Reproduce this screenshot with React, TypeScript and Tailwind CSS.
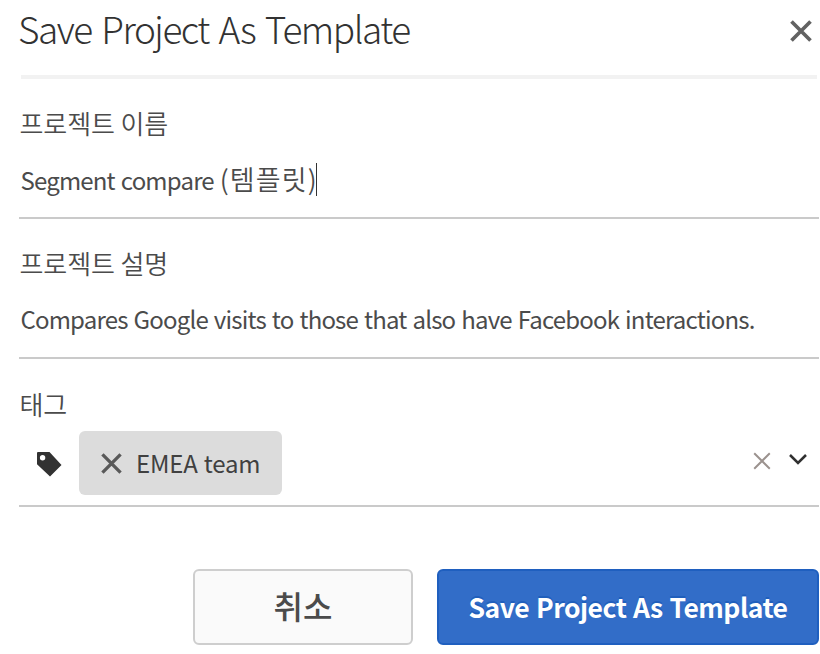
import type { ReactNode } from "react";

function Cross({ size, color, width }: { size: number; color: string; width: number }) {
  return (
    <svg width={size} height={size} viewBox="0 0 22 22" fill="none" stroke={color} strokeWidth={width} className="block shrink-0">
      <path d="M1.5 1.5 20.5 20.5M20.5 1.5 1.5 20.5" />
    </svg>
  );
}

function Field({ label, children }: { label: string; children: ReactNode }) {
  return (
    <div className="ml-[19px] mr-px h-[140px] border-b-2 border-[#cacaca]">
      <div className="h-[70px] pt-[27px] pl-[0.5px] text-[26px] leading-[34px] font-[350] tracking-[-0.1px]">{label}</div>
      <div className="flex h-[60px] items-center pl-[1.5px] text-[24px] leading-[34px] tracking-[-0.82px] [word-spacing:1.4px]">{children}</div>
    </div>
  );
}

export default function App() {
  return (
    <main className="h-[654px] w-[820px] overflow-hidden bg-white font-['Noto_Sans_CJK_KR','Noto_Sans',sans-serif] whitespace-nowrap text-[#4b4b4b]">
      <header className="ml-[21px] mr-[3px] flex h-[79px] items-start justify-between border-b-4 border-[#f2f2f2]">
        <h1 className="-ml-[3px] text-[37px] leading-[57px] font-light tracking-[-1.5px] text-[#323232] [word-spacing:3px]">Save Project As Template</h1>
        <button aria-label="Close" className="mt-[20px] mr-[5px]">
          <Cross size={22} color="#626262" width={3.7} />
        </button>
      </header>

      <Field label="프로젝트 이름">
        <span>Segment compare <span className="font-[350] text-[27px] tracking-[1.1px]">(템플릿)</span></span>
        <span className="-ml-[2px] h-[33px] w-px bg-[#323232]" />
      </Field>
      <Field label="프로젝트 설명">
        <span>Compares Google visits to those that also have Facebook interactions.</span>
      </Field>

      <section className="ml-[19px] mr-px h-[148px] border-b-2 border-[#cacaca]">
        <div className="h-[72px] pt-[28px] pl-[0.5px] text-[26px] leading-[34px] font-[350] tracking-[-0.2px]">태그</div>
        <div className="flex h-[64px] items-center">
          <svg width="25" height="25" viewBox="0 0 25 25" className="ml-[18px] mt-[3px] block shrink-0">
            <path fill="#323232" fillRule="evenodd" d="M1 0h11.5L24.5 13 13 24.5 0 12.2V1Q0 0 1 0ZM5.6 3a2.7 2.7 0 1 0 0 5.4 2.7 2.7 0 0 0 0-5.4Z" />
          </svg>
          <div className="ml-[17px] flex h-[64px] w-[203px] items-center rounded-[6px] bg-[#dcdcdc] pl-[22px]">
            <Cross size={21} color="#595959" width={3.5} />
            <span className="ml-[14px] text-[24px] leading-[34px] tracking-[-0.2px] text-[#404040] [word-spacing:1px]">EMEA team</span>
          </div>
          <div className="mr-[12px] mb-[5px] ml-auto flex items-center">
            <Cross size={18} color="#9b928e" width={2.4} />
            <svg width="18" height="11" viewBox="0 0 18 11" fill="none" stroke="#303030" strokeWidth="2.5" className="mb-[2px] ml-[18px] block">
              <path d="m1 1 8 8 8-8" />
            </svg>
          </div>
        </div>
      </section>

      <footer className="mt-[62px] mr-px flex justify-end gap-[24px]">
        <button className="flex h-[76px] w-[220px] items-center justify-center rounded-[6px] border-2 border-[#cecece] bg-[#fafafa] pb-[5px] text-[32px] leading-[40px] font-medium">취소</button>
        <button className="flex h-[76px] w-[382px] items-center justify-center rounded-[6px] border-2 border-[#1f5fbf] bg-[#326dc8] text-[26.5px] leading-[40px] font-bold tracking-[-0.5px] text-white [text-shadow:0_-2px_0_#205fbc] [word-spacing:1.3px]">Save Project As Template</button>
      </footer>
    </main>
  );
}
